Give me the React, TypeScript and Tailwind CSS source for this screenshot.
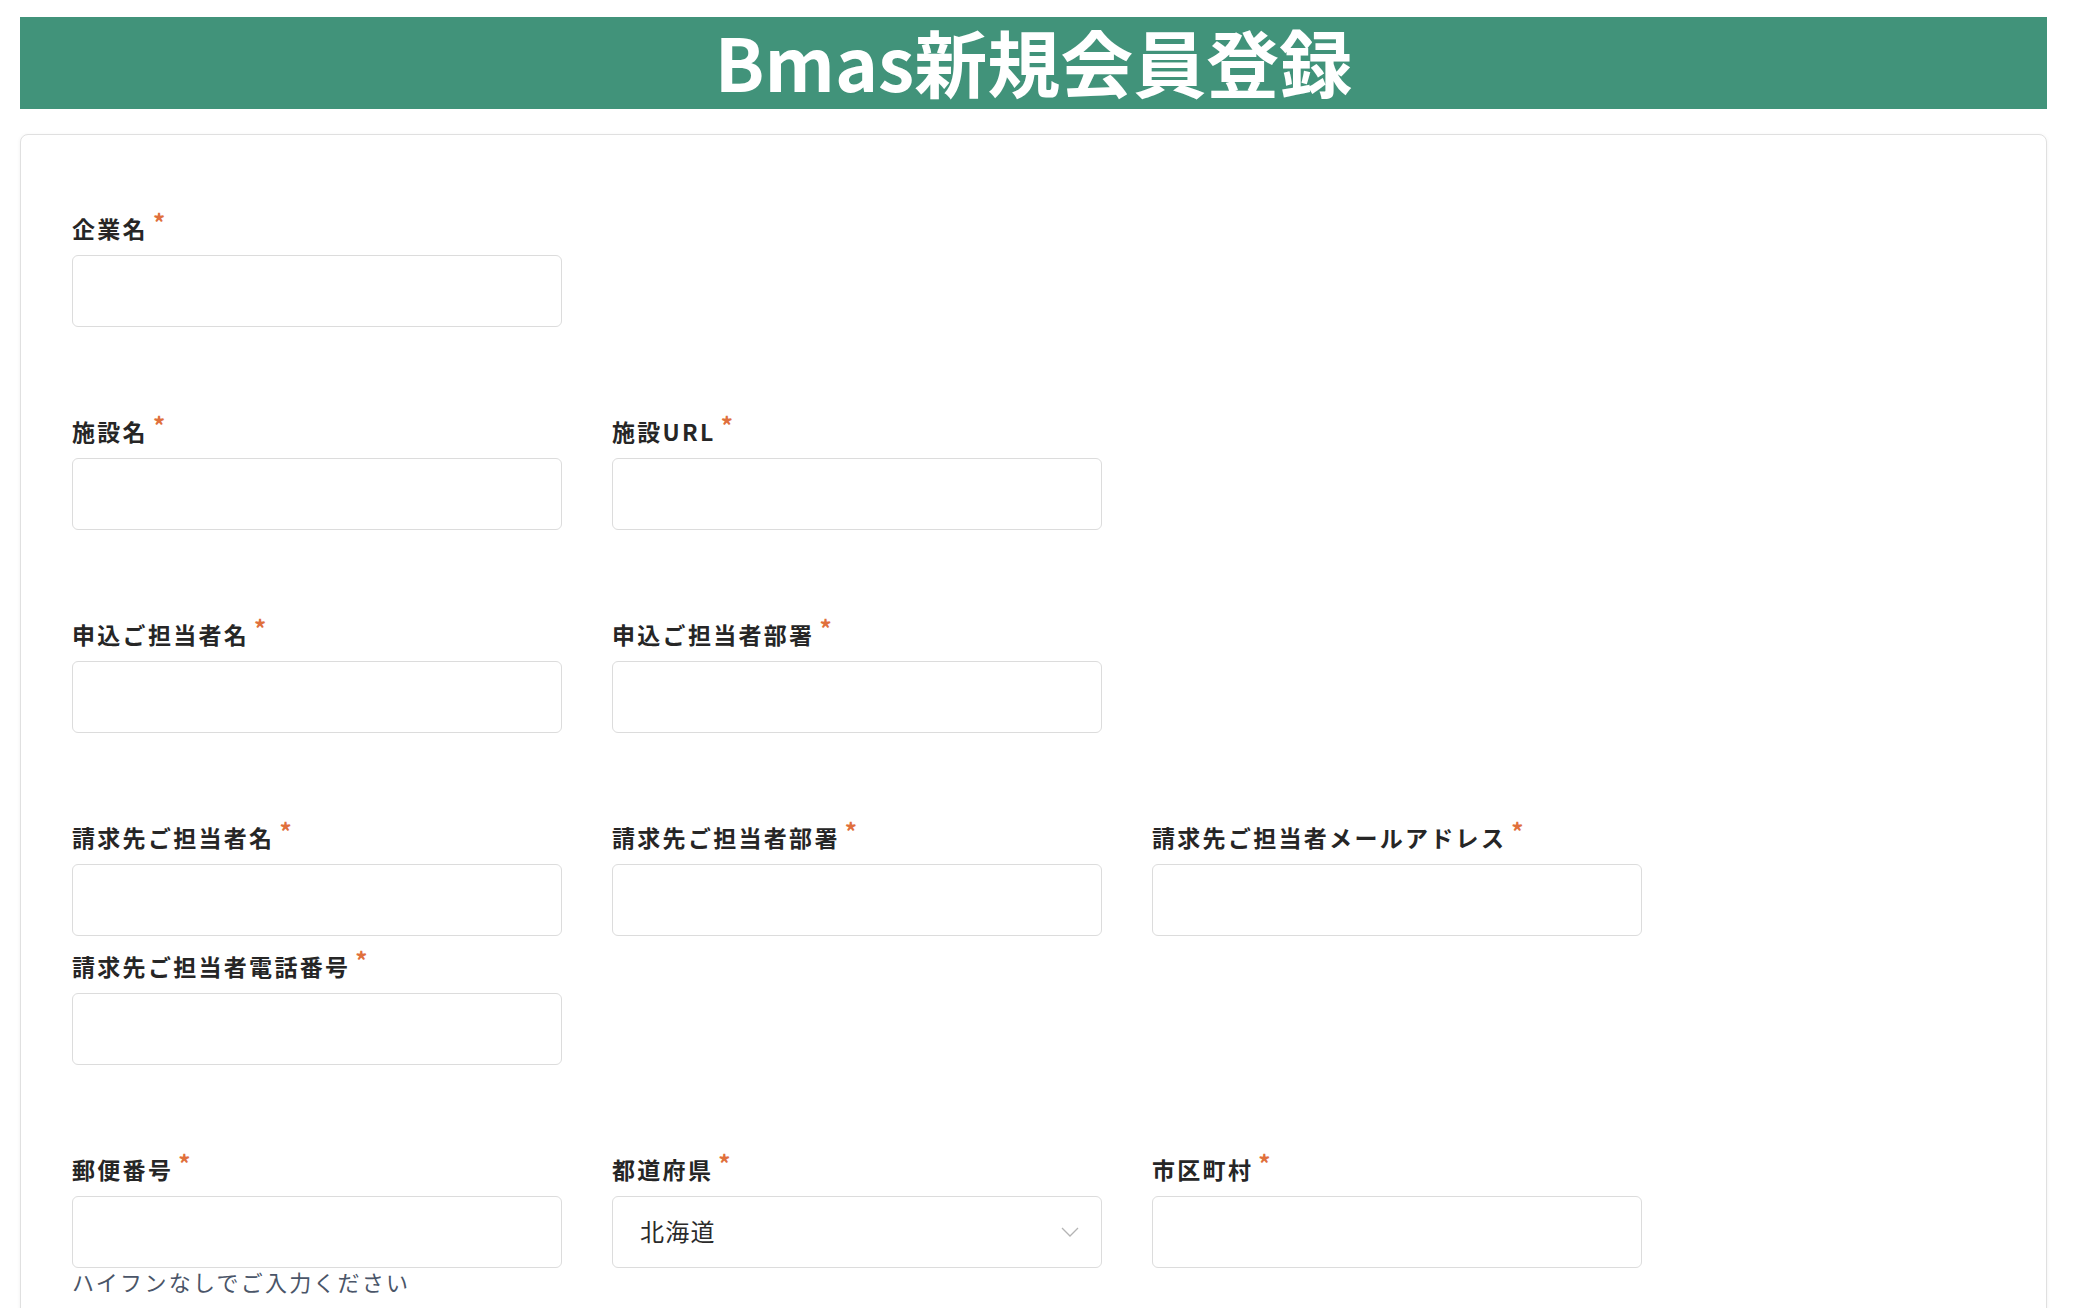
type Field = {
  label: string;
  kind?: "text" | "select";
  value?: string;
  help?: string;
};

const sections: Field[][] = [
  [{ label: "企業名" }],
  [{ label: "施設名" }, { label: "施設URL" }],
  [{ label: "申込ご担当者名" }, { label: "申込ご担当者部署" }],
  [
    { label: "請求先ご担当者名" },
    { label: "請求先ご担当者部署" },
    { label: "請求先ご担当者メールアドレス" },
    { label: "請求先ご担当者電話番号" },
  ],
  [
    { label: "郵便番号", help: "ハイフンなしでご入力ください" },
    { label: "都道府県", kind: "select", value: "北海道" },
    { label: "市区町村" },
  ],
];

const FormField = ({ field }: { field: Field }) => (
  <div className="flex w-[490px] flex-col">
    {/* Label */}
    <div className="flex h-[32px] items-center">
      <span className="text-[23px] font-bold leading-[32px] tracking-[0.1em] text-[#262626]">
        {field.label}
      </span>
      <span className="-mt-[12px] ml-[5px] text-[24px] font-bold leading-none text-[#e0703c]">*</span>
    </div>

    {field.kind === "select" ? (
      <div className="mt-[11px] flex h-[72px] items-center justify-between rounded-[6px] border border-[#dcdcdc] bg-white pl-[27px] pr-[22px]">
        <span className="-mt-[2px] text-[24px] tracking-[0.05em] text-[#2b2b2b]">{field.value}</span>
        <svg width="18" height="10" viewBox="0 0 18 10" fill="none" className="text-[#b4b4b4]">
          <path d="M1 1l8 8 8-8" stroke="currentColor" strokeWidth="1.3" />
        </svg>
      </div>
    ) : (
      <input
        type="text"
        className="mt-[11px] h-[72px] w-full rounded-[6px] border border-[#dcdcdc] bg-white px-[20px] text-[22px] outline-none"
      />
    )}

    {field.help && (
      <p className="-mt-[2px] text-[22px] leading-[30px] tracking-[0.1em] text-[#4a5568]">{field.help}</p>
    )}
  </div>
);

export default function App() {
  return (
    <div
      className="h-[1308px] overflow-hidden bg-white pl-[20px] pr-[27px] pt-[17px]"
      style={{ fontFamily: '"Noto Sans CJK JP", "Noto Sans", sans-serif' }}
    >
      {/* Header */}
      <header className="flex h-[92px] items-center justify-center bg-[#41937a] pb-[6px]">
        <h1 className="text-[73px] font-bold leading-none text-white">Bmas新規会員登録</h1>
      </header>

      {/* Form card */}
      <div className="mt-[25px] rounded-[8px] border border-[#e0e0e0] bg-white pb-[120px] pl-[51px] pr-[51px] pt-[77px] shadow-[0_1px_4px_rgba(0,0,0,0.06)]">
        <div className="flex flex-col gap-[88px]">
          {sections.map((row, i) => (
            <div key={i} className="flex flex-wrap gap-x-[50px] gap-y-[14px]">
              {row.map((f) => (
                <FormField key={f.label} field={f} />
              ))}
            </div>
          ))}
        </div>
      </div>
    </div>
  );
}
